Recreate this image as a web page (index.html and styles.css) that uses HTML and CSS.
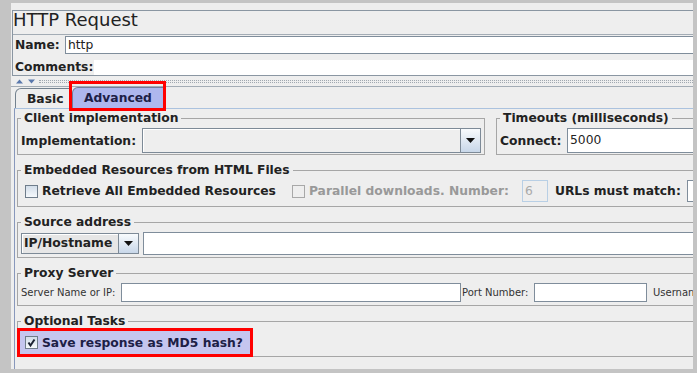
FILE: index.html
```html
<!DOCTYPE html>
<html lang="en">
<head>
    <meta charset="UTF-8">
    <title>HTTP Request</title>
    <link rel="stylesheet" href="styles.css">
</head>
<body>
    <div class="frame">
        <div class="head">
            <div class="title">HTTP Request</div>
            <div class="name-row">
                <span class="name-label">Name:</span>
                <div class="field name-field">http</div>
            </div>
            <div class="comments-row">
                <span class="comments-label">Comments:</span>
                <div class="comments-area"></div>
            </div>
        </div>

        <div class="splitter">
            <svg class="split-arrows" width="20" height="5" viewBox="0 0 20 5">
                <polygon points="0,4.5 3.5,0.5 7,4.5" fill="#5a78ac"/>
                <polygon points="12,0.5 19,0.5 15.5,4.5" fill="#5a78ac"/>
            </svg>
            <div class="dots"></div>
        </div>

        <div class="tabbed">
            <div class="tab-strip">
                <div class="tab tab-basic">Basic</div>
                <div class="tab tab-active">Advanced</div>
            </div>
            <div class="tab-body">
                <div class="group-row">
                    <fieldset class="group group-client">
                        <legend>Client implementation</legend>
                        <div class="group-line line-client">
                            <span class="impl-label">Implementation:</span>
                            <div class="combo combo-impl">
                                <div class="combo-value"></div>
                                <div class="combo-arrow">
                                    <svg width="9" height="5" viewBox="0 0 9 5"><polygon points="0,0 9,0 4.5,5" fill="#111"/></svg>
                                </div>
                            </div>
                        </div>
                    </fieldset>
                    <fieldset class="group group-timeouts">
                        <legend>Timeouts (milliseconds)</legend>
                        <div class="group-line line-client">
                            <span class="connect-label">Connect:</span>
                            <div class="field connect-field">5000</div>
                        </div>
                    </fieldset>
                </div>

                <fieldset class="group">
                    <legend>Embedded Resources from HTML Files</legend>
                    <div class="group-line line-embedded">
                        <span class="check"></span>
                        <span class="check-text">Retrieve All Embedded Resources</span>
                        <span class="check check-disabled"></span>
                        <span class="check-text text-disabled">Parallel downloads. Number:</span>
                        <div class="field field-disabled">6</div>
                        <span class="urls-label">URLs must match:</span>
                        <div class="field urls-field"></div>
                    </div>
                </fieldset>

                <fieldset class="group">
                    <legend>Source address</legend>
                    <div class="group-line line-source">
                        <div class="combo combo-source">
                            <div class="combo-value">IP/Hostname</div>
                            <div class="combo-arrow">
                                <svg width="9" height="5" viewBox="0 0 9 5"><polygon points="0,0 9,0 4.5,5" fill="#111"/></svg>
                            </div>
                        </div>
                        <div class="field source-field"></div>
                    </div>
                </fieldset>

                <fieldset class="group">
                    <legend>Proxy Server</legend>
                    <div class="group-line line-proxy">
                        <span class="small-label server-label">Server Name or IP:</span>
                        <div class="field server-field"></div>
                        <span class="small-label port-label">Port Number:</span>
                        <div class="field port-field"></div>
                        <span class="small-label user-label">Usernan</span>
                    </div>
                </fieldset>

                <fieldset class="group group-optional">
                    <legend>Optional Tasks</legend>
                    <div class="group-line line-optional">
                        <div class="md5-row">
                            <span class="check check-on">
                                <svg width="11" height="11" viewBox="0 0 11 11"><path d="M2.5 5.5 L4.5 8.5 L8.5 2.5" fill="none" stroke="#1c2233" stroke-width="2"/></svg>
                            </span>
                            <span class="check-text">Save response as MD5 hash?</span>
                        </div>
                    </div>
                </fieldset>
            </div>
        </div>
    </div>
</body>
</html>
```

FILE: styles.css
```css
body {
    margin: 0;
    background: #c4c4c4;
    font-family: "DejaVu Sans", sans-serif;
    color: #222;
    height: 373px;
    overflow: hidden;
}

.frame {
    margin: 3px 0 0 11px;
    width: 682px;
    height: 366px;
    background: #eeeeee;
    overflow: hidden;
}

/* header: title, name, comments */
.head {
    margin: 7px 0 0 1px;
    border: 1px solid #8a96a2;
    border-right: none;
}

.title {
    height: 23px;
    line-height: 18px;
    font-size: 18px;
    border-bottom: 1px solid #a3acb5;
}

.name-row, .comments-row {
    display: flex;
    height: 20px;
    box-sizing: border-box;
    padding-left: 2px;
    font-size: 12.3px;
}

.name-row {
    padding-top: 1px;
}

.comments-row {
    padding-top: 5px;
}

.name-label, .comments-label {
    font-weight: bold;
}

.name-label {
    width: 50px;
    line-height: 18px;
}

.comments-label {
    width: 79px;
    line-height: 15px;
}

.field {
    background: #fff;
    border: 1px solid #7f8d9b;
    box-sizing: border-box;
    font-size: 12.3px;
    padding-left: 2px;
}

.name-field {
    flex: 1;
    height: 18px;
    line-height: 16px;
    border-right: none;
}

.comments-area {
    flex: 1;
    height: 15px;
    background: #fff;
}

/* splitter */
.splitter {
    height: 10px;
    display: flex;
    align-items: center;
    padding-left: 5px;
}

.split-arrows {
    margin-right: 3px;
}

.dots {
    flex: 1;
    height: 1px;
    border-top: 1px dotted #a0a8b0;
    border-bottom: 1px dotted #a0a8b0;
}

/* tabs */
.tabbed {
    border-top: 1px solid #a3acb5;
}

.tab-strip {
    display: flex;
    align-items: flex-end;
    height: 21px;
    padding-left: 4px;
    gap: 1px;
}

.tab {
    box-sizing: border-box;
    padding-left: 11px;
    font-size: 12.3px;
    font-weight: bold;
    border: 1px solid #74828f;
    border-bottom: none;
    border-top-left-radius: 6px;
}

.tab-basic {
    width: 56px;
    height: 20px;
    line-height: 20px;
}

.tab-active {
    position: relative;
    width: 92px;
    height: 21px;
    line-height: 21px;
    background: #aeb7ee;
    color: #1d2046;
    border-color: #6f7d9c;
}

.tab-active::after {
    content: "";
    position: absolute;
    top: -7px;
    left: -4px;
    right: -3px;
    bottom: -3px;
    border: 3px solid #ff0000;
}

.tab-body {
    margin-left: 3px;
    width: 760px;
    height: 261px;
    border-top: 1px solid #abc2de;
    border-left: 1px solid #8898bc;
    padding: 2px 0 0 2px;
    box-sizing: border-box;
}

/* titled groups */
.group-row {
    display: flex;
    gap: 11px;
}

.group {
    margin: 0;
    padding: 0 3px;
    border: 1px solid #a6a6a6;
    min-width: 0;
    box-sizing: border-box;
}

.group-row + .group, .tab-body > .group + .group {
    margin-top: 8px;
}

.tab-body > .group-optional {
    margin-top: 7px;
}

.group legend {
    padding: 0 3px;
    font-size: 12.3px;
    font-weight: bold;
    line-height: 15px;
}

.group-client {
    width: 468px;
}

.group-timeouts {
    flex: 1;
}

.group-line {
    display: flex;
    align-items: center;
    font-size: 12.3px;
}

.line-client {
    padding: 2px 0 1px;
    height: 25px;
}

.line-embedded {
    padding: 2px 0 4px;
    height: 22px;
}

.line-source {
    padding: 2px 0;
    height: 23px;
}

.line-proxy {
    padding: 2px 0 3px;
    height: 19px;
}

.line-optional {
    padding: 2px 0;
    height: 23px;
}

.impl-label, .connect-label, .urls-label {
    font-weight: bold;
}

.impl-label {
    width: 122px;
}

.connect-label {
    width: 67px;
}

.combo {
    display: flex;
    box-sizing: border-box;
    border: 1px solid #7d8a97;
    background: #eee;
}

.combo-value {
    flex: 1;
    box-shadow: inset 1px 1px #fff;
    font-weight: bold;
    padding-left: 2px;
}

.combo-arrow {
    width: 19px;
    border-left: 1px solid #7d8a97;
    background: linear-gradient(#f8fbfd, #c8d7e9);
    display: flex;
    align-items: center;
    justify-content: center;
}

.combo-impl {
    width: 340px;
    height: 25px;
}

.connect-field {
    flex: 1;
    height: 25px;
    line-height: 23px;
}

/* checkboxes */
.check {
    width: 13px;
    height: 13px;
    box-sizing: border-box;
    border: 1px solid #6f7d8b;
    background: linear-gradient(#d3deea, #f5f8fb);
    margin-left: 4px;
    display: flex;
    align-items: center;
    justify-content: center;
}

.check-text {
    font-weight: bold;
    margin-left: 4px;
}

.check-disabled {
    border-color: #a8a8a8;
    background: #eee;
    margin-left: 16px;
}

.text-disabled {
    color: #999;
}

.field-disabled {
    width: 26px;
    height: 22px;
    line-height: 20px;
    margin-left: 13px;
    border-color: #b8cfe5;
    background: #eee;
    color: #aaa;
}

.urls-label {
    margin-left: 7px;
}

.urls-field {
    width: 80px;
    height: 22px;
    margin-left: 6px;
}

.combo-source {
    width: 118px;
    height: 21px;
    background: #e6e6e6;
}

.combo-source .combo-value {
    line-height: 19px;
}

.source-field {
    flex: 1;
    height: 23px;
    margin-left: 4px;
}

.small-label {
    font-size: 10px;
    color: #333;
}

.server-label {
    width: 100px;
}

.server-field {
    width: 340px;
    height: 19px;
}

.port-label {
    width: 72px;
    margin-left: 1px;
}

.port-field {
    width: 113px;
    height: 19px;
}

.user-label {
    margin-left: 6px;
}

.md5-row {
    display: flex;
    align-items: center;
    margin-left: -1px;
    width: 230px;
    height: 23px;
    background: #c5c6ef;
    outline: 3px solid #ff0000;
    color: #1d2046;
}

.md5-row .check {
    margin-left: 5px;
}
```
